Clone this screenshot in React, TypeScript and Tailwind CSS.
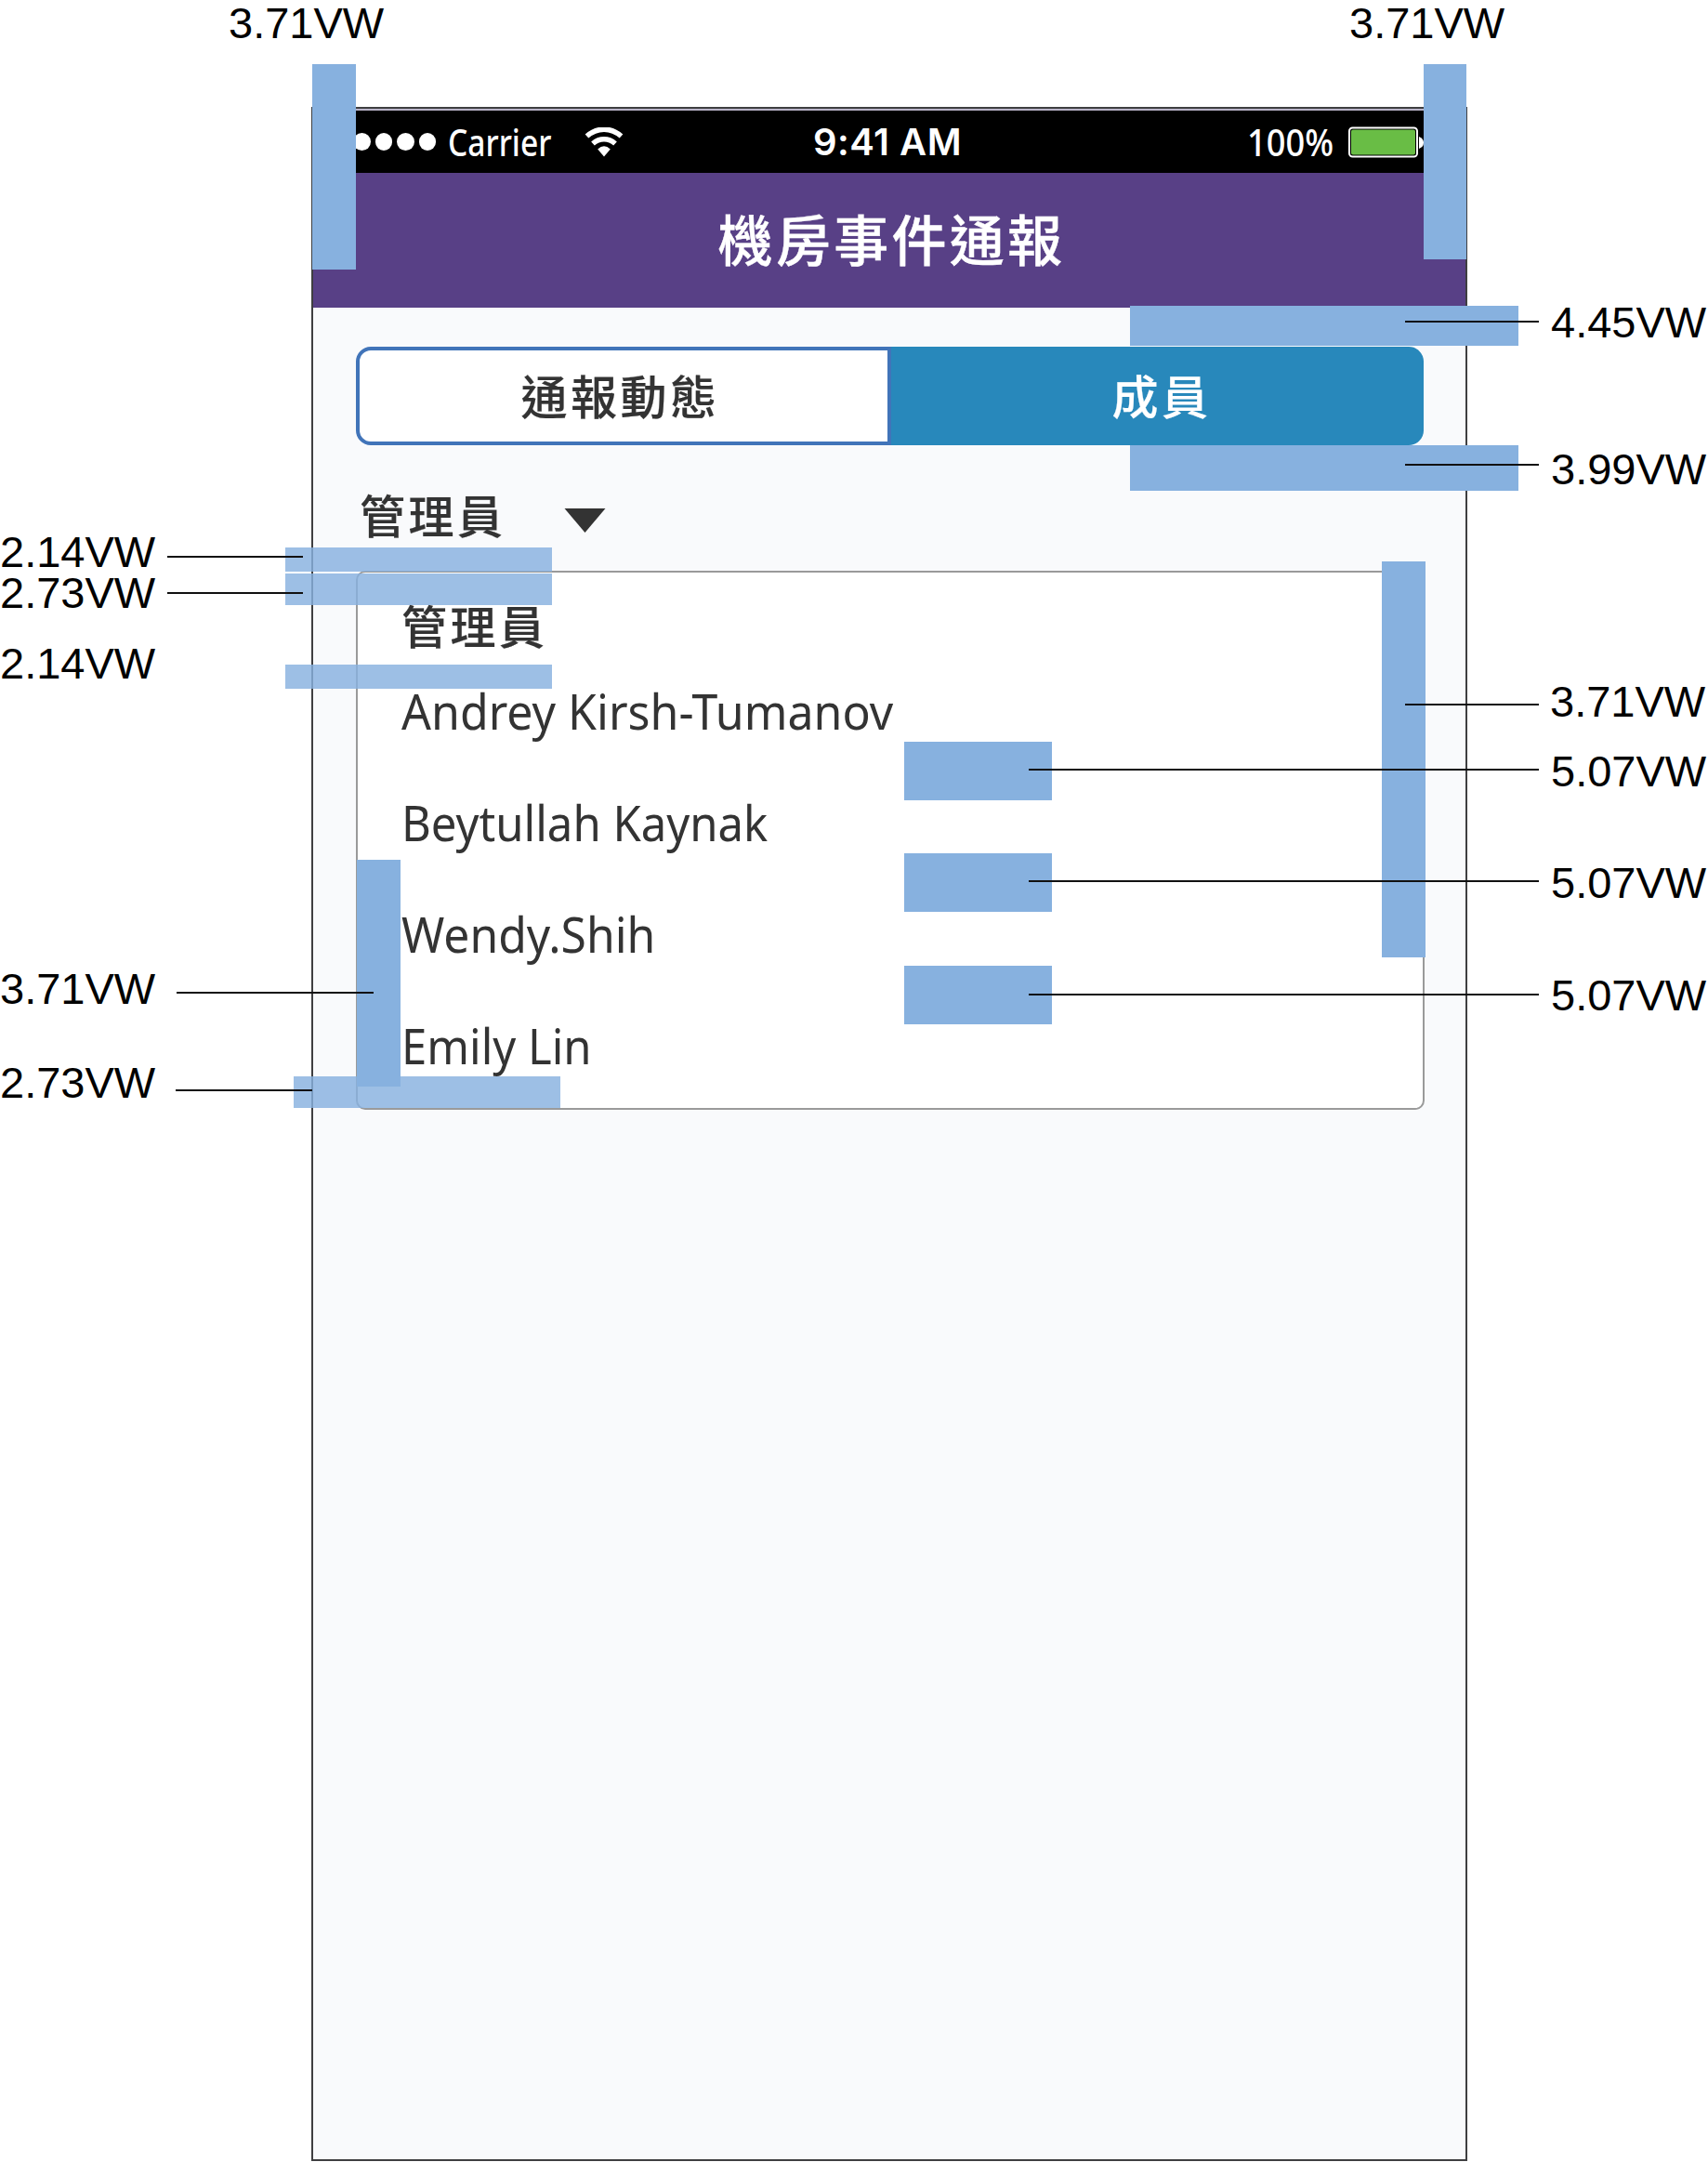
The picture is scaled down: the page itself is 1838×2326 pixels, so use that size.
import React from "react";

const members = [
  { name: "Andrey Kirsh-Tumanov", fit: "scale-x-[0.962]" },
  { name: "Beytullah Kaynak", fit: "scale-x-[0.943]" },
  { name: "Wendy.Shih", fit: "scale-x-[0.958]" },
  { name: "Emily Lin", fit: "scale-x-[0.942]" },
];

const labels = [
  { text: "3.71VW", place: "left-[246px] top-[4px]" },
  { text: "3.71VW", place: "left-[1452px] top-[4px]" },
  { text: "4.45VW", place: "left-[1669px] top-[326px]" },
  { text: "3.99VW", place: "left-[1669px] top-[484px]" },
  { text: "3.71VW", place: "left-[1668px] top-[734px]" },
  { text: "5.07VW", place: "left-[1669px] top-[809px]" },
  { text: "5.07VW", place: "left-[1669px] top-[929px]" },
  { text: "5.07VW", place: "left-[1669px] top-[1050px]" },
  { text: "2.14VW", place: "left-0 top-[573px]" },
  { text: "2.73VW", place: "left-0 top-[617px]" },
  { text: "2.14VW", place: "left-0 top-[693px]" },
  { text: "3.71VW", place: "left-0 top-[1043px]" },
  { text: "2.73VW", place: "left-0 top-[1144px]" },
];

const solidBars = [
  "left-[336px] top-[69px] w-[47px] h-[221px]",
  "left-[1532px] top-[69px] w-[46px] h-[210px]",
  "left-[1216px] top-[329px] w-[418px] h-[43px]",
  "left-[1216px] top-[479px] w-[418px] h-[49px]",
  "left-[384px] top-[925px] w-[47px] h-[244px]",
  "left-[1487px] top-[604px] w-[47px] h-[426px]",
  "left-[973px] top-[798px] w-[159px] h-[63px]",
  "left-[973px] top-[918px] w-[159px] h-[63px]",
  "left-[973px] top-[1039px] w-[159px] h-[63px]",
];

const softBars = [
  "left-[307px] top-[589px] w-[287px] h-[26px]",
  "left-[307px] top-[617px] w-[287px] h-[34px]",
  "left-[307px] top-[715px] w-[287px] h-[26px]",
  "left-[316px] top-[1158px] w-[287px] h-[34px]",
];

const leaders = [
  "left-[1512px] top-[345px] w-[144px]",
  "left-[1512px] top-[499px] w-[144px]",
  "left-[1512px] top-[757px] w-[144px]",
  "left-[1107px] top-[827px] w-[549px]",
  "left-[1107px] top-[947px] w-[549px]",
  "left-[1107px] top-[1069px] w-[549px]",
  "left-[180px] top-[598px] w-[146px]",
  "left-[180px] top-[637px] w-[146px]",
  "left-[190px] top-[1067px] w-[212px]",
  "left-[189px] top-[1172px] w-[147px]",
];

function StatusBar() {
  return (
    <div className="grid h-[67px] grid-cols-3 items-center bg-black text-white">
      <div className="flex items-center pl-[43px]">
        <div className="flex gap-[5px]">
          {[0, 1, 2, 3].map((i) => (
            <span key={i} className="h-[19px] w-[18.500px] rounded-full bg-white" />
          ))}
        </div>
        <span className="ml-[13px] w-[110px] origin-left scale-x-[0.86] whitespace-nowrap font-['Noto_Sans'] text-[39px] leading-[56px]">
          Carrier
        </span>
        <svg className="ml-[37px]" width="42" height="32" viewBox="0 0 42 32" fill="none" stroke="#fff">
          <path d="M2.500 9.500C13.500 -0.300 28.500 -0.300 39.500 9.500" strokeWidth="5.500" />
          <path d="M9 17.500C16 11.200 26 11.200 33 17.500" strokeWidth="5.500" />
          <path d="M21 31.500L14.200 23.600Q21 17 27.800 23.600Z" fill="#fff" stroke="none" />
        </svg>
      </div>
      <span className="pr-[4px] text-center font-[Inter] text-[40px] leading-[56px] font-semibold tracking-[0.500px]">
        9:41 AM
      </span>
      <div className="flex items-center justify-end pr-[45px]">
        <span className="w-[89px] origin-left scale-x-[0.93] whitespace-nowrap font-['Noto_Sans'] text-[39px] leading-[56px]">
          100%
        </span>
        <svg className="ml-[20px]" width="81" height="34" viewBox="0 0 81 34">
          <rect x="1" y="1.500" width="73" height="31" rx="3.500" fill="#000" stroke="#fff" strokeWidth="2" />
          <rect x="3" y="3.500" width="69" height="27" rx="2" fill="#69bd45" />
          <path d="M76 11Q81 13 81 17.500Q81 22 76 24Z" fill="#fff" />
        </svg>
      </div>
    </div>
  );
}

function Phone() {
  return (
    <div className="ml-[335px] flex h-[2210px] w-[1244px] flex-col border-2 border-[#3f3f41] bg-[#f9fafc] font-['Noto_Sans_CJK_TC',sans-serif] font-medium text-[#333]">
      <div className="h-[2px] bg-[#b9b3c8]" />
      <StatusBar />
      <header className="flex h-[145px] items-center justify-center bg-[#584086] pb-[5px] pl-[5px] text-[59px] tracking-[3.300px] text-white [-webkit-text-stroke:0.4px]">
        <h1 className="font-medium">機房事件通報</h1>
      </header>
      <div className="mt-[42px] ml-[46px] flex h-[106px] w-[1149px] text-[50px] tracking-[3.500px] [-webkit-text-stroke:0.2px]">
        <button className="h-full w-[576px] rounded-l-[16px] border-4 border-[#4174b9] bg-white pr-[7px] pb-[4px]">
          通報動態
        </button>
        <button className="h-full w-[573px] rounded-r-[16px] bg-[#2888bb] pb-[4px] pl-[9px] text-white">成員</button>
      </div>
      <div className="mt-[38px] ml-[50px] flex h-[72px] items-center text-[49px] leading-[72px] tracking-[3.500px]">
        <span className="w-[156px] whitespace-nowrap [-webkit-text-stroke:0.2px]">管理員</span>
        <svg className="mt-[13px] ml-[64px]" width="45" height="26" viewBox="0 0 45 26">
          <path d="M0.500 0H44.500L22.500 26Z" fill="#333" />
        </svg>
      </div>
      <section className="mt-[25px] ml-[46px] h-[580px] w-[1150px] rounded-[10px] border-2 border-[#9a9a9a] bg-white pl-[47px]">
        <h2 className="mt-[20px] h-[72px] text-[49px] leading-[72px] font-medium tracking-[3.500px] [-webkit-text-stroke:0.2px]">
          管理員
        </h2>
        <ul className="mt-[27px] flex flex-col gap-[60px] font-['Noto_Sans'] text-[52px] leading-[60px] font-normal">
          {members.map(({ name, fit }) => (
            <li key={name} className={`origin-left ${fit}`}>
              {name}
            </li>
          ))}
        </ul>
      </section>
    </div>
  );
}

export default function App() {
  return (
    <div className="relative h-[2326px] w-[1838px] overflow-hidden bg-white pt-[115px]">
      <Phone />
      {softBars.map((place) => (
        <div key={place} className={`absolute bg-[#87b1df]/82 ${place}`} />
      ))}
      {solidBars.map((place) => (
        <div key={place} className={`absolute bg-[#87b1df] ${place}`} />
      ))}
      {leaders.map((place) => (
        <div key={place} className={`absolute h-[2px] bg-[#111] ${place}`} />
      ))}
      {labels.map(({ text, place }) => (
        <span
          key={place}
          className={`absolute whitespace-nowrap font-['Liberation_Sans'] text-[47px] leading-[41px] text-black ${place}`}
        >
          {text}
        </span>
      ))}
    </div>
  );
}
